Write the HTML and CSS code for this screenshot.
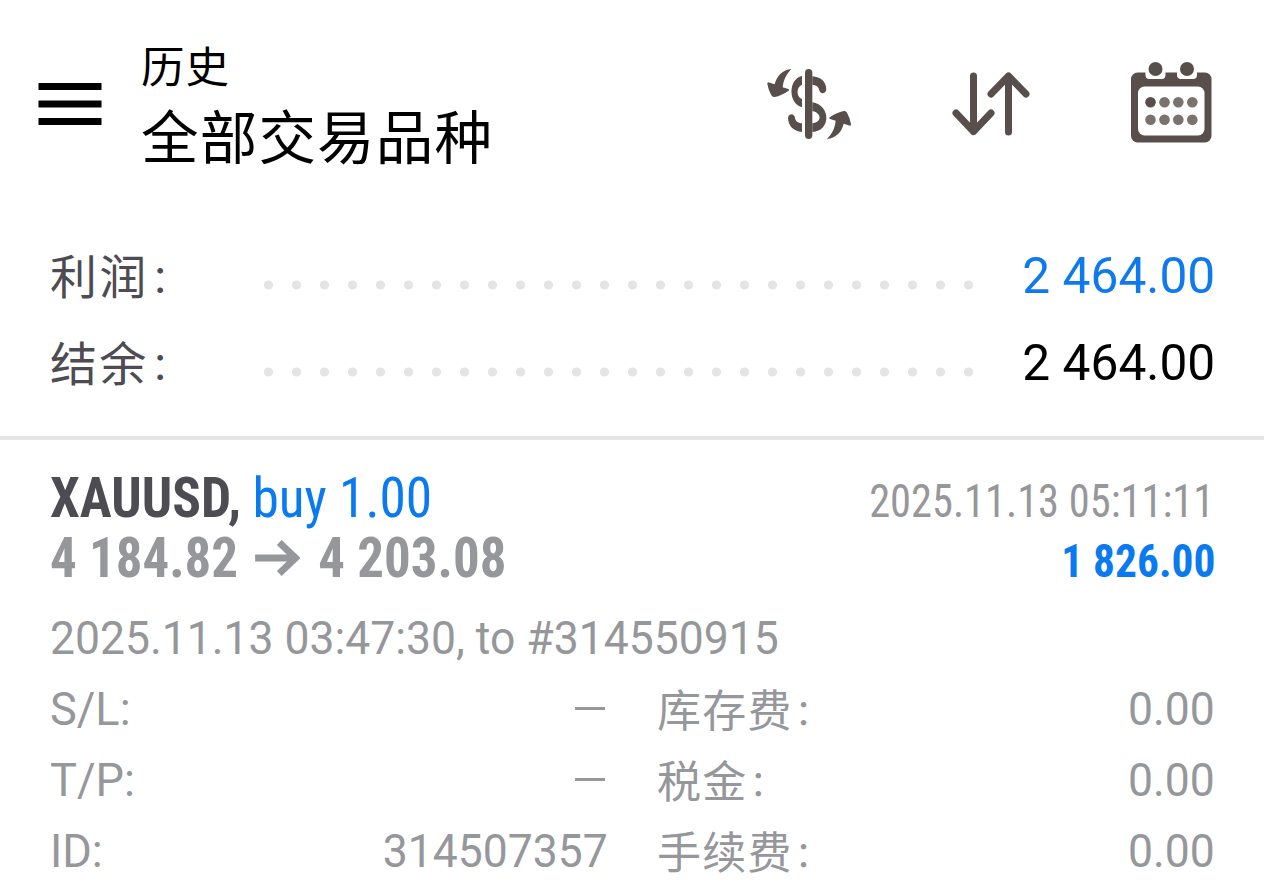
FILE: index.html
```html
<!DOCTYPE html>
<html lang="zh-CN">
<head>
<meta charset="utf-8">
<title>历史</title>
<link rel="stylesheet" href="styles.css">
</head>
<body>
<header class="topbar">
  <svg class="menu" viewBox="0 0 64 44"><path d="M.5 4.500h63M.5 22h63M.5 39.500h63" stroke="#000" stroke-width="7"/></svg>
  <div class="titles">
    <div class="title-small">历史</div>
    <div class="title-large">全部交易品种</div>
  </div>
  <div class="actions">
    <svg class="icon" viewBox="0 0 360 330" fill="#584e4c">
      <rect x="165" y="57" width="22" height="210" rx="11"/>
      <path d="M156 78C114 87 114 160 156 172V147C138 141 138 111 156 104Z"/>
      <path d="M187 79C212 81 228 94 229 118C228 132 211 135 208 121C206 110 198 105 187 104Z"/>
      <path d="M187 157C243 166 243 244 187 246V220C216 217 216 189 187 183Z"/>
      <path d="M156 246C130 243 115 228 114 203C116 189 133 189 135 203C136 213 144 219 156 220Z"/>
      <path d="M124 57C98 60 80 77 74 103L55 97Q51 97 52 102Q55 120 64 136Q67 142 74 141Q94 137 116 122Q119 119 115 117L98 112C100 92 107 75 124 57Z"/>
      <path d="M231 267C257 264 275 247 281 221L300 227Q304 227 303 222Q300 204 291 188Q288 182 281 183Q261 187 239 202Q236 205 240 207L257 212C255 232 248 249 231 267Z"/>
    </svg>
    <svg class="icon" viewBox="930 50 120 110" fill="none" stroke="#584e4c" stroke-width="7" stroke-linecap="round" stroke-linejoin="round">
      <path d="M973.500 76V131.500M956 113L973.500 131.500L991 113M1008.500 132V76M991 94L1008.500 76L1026 94"/>
    </svg>
    <svg class="icon" viewBox="1110 50 120 110">
      <rect x="1131" y="72.500" width="80.500" height="70" rx="6.500" fill="#584e4c"/>
      <path d="M1145.500 65H1165.500V75Q1165.500 79 1161.500 79H1149.500Q1145.500 79 1145.500 75ZM1177 65H1197V75Q1197 79 1193 79H1181Q1177 79 1177 75Z" fill="#fff"/>
      <rect x="1138" y="86.500" width="66.500" height="49" rx="6.500" fill="#fff"/>
      <g fill="#584e4c"><circle cx="1155.500" cy="69" r="7"/><circle cx="1187" cy="69" r="7"/><circle cx="1150.500" cy="102.300" r="5.300"/></g>
      <g fill="#7a726f"><circle cx="1164.500" cy="102.300" r="5.300"/><circle cx="1178.300" cy="102.300" r="5.300"/><circle cx="1192.300" cy="102.300" r="5.300"/><circle cx="1150.500" cy="119.700" r="5.300"/><circle cx="1164.500" cy="119.700" r="5.300"/><circle cx="1178.300" cy="119.700" r="5.300"/><circle cx="1192.300" cy="119.700" r="5.300"/></g>
    </svg>
  </div>
</header>
<section class="summary">
  <div class="sum-row"><span class="sum-label">利润<span class="colon">：</span></span><span class="dots"></span><span class="sum-value profit">2 464.00</span></div>
  <div class="sum-row"><span class="sum-label">结余<span class="colon">：</span></span><span class="dots"></span><span class="sum-value">2 464.00</span></div>
</section>
<main class="deal">
  <div class="deal-row">
    <div class="deal-main order"><span class="cond symbol">XAUUSD,</span><span class="cond side">buy 1.00</span></div>
    <span class="cond time">2025.11.13 05:11:11</span>
  </div>
  <div class="deal-row">
    <div class="deal-main prices"><span class="cond price">4 184.82</span><svg class="arrow" viewBox="0 0 46 36" preserveAspectRatio="none"><path d="M0 18H41M24.500 2.500L41 18L24.500 33.500" fill="none" stroke="#96979b" stroke-width="7"/></svg><span class="cond price">4 203.08</span></div>
    <span class="cond result">1 826.00</span>
  </div>
  <div class="note">2025.11.13 03:47:30, to #314550915</div>
  <div class="details">
    <div class="pair"><span class="key">S/L:</span><i class="dash"></i></div>
    <div class="pair"><span class="cjk">库存费<span class="colon">：</span></span><span class="num">0.00</span></div>
    <div class="pair"><span class="key">T/P:</span><i class="dash"></i></div>
    <div class="pair"><span class="cjk">税金<span class="colon">：</span></span><span class="num">0.00</span></div>
    <div class="pair"><span class="key">ID:</span><span class="num">314507357</span></div>
    <div class="pair"><span class="cjk">手续费<span class="colon">：</span></span><span class="num">0.00</span></div>
  </div>
</main>
</body>
</html>
```
FILE: styles.css
```css
* { box-sizing: border-box; }
body {
  margin: 0;
  height: 894px;
  overflow: hidden;
  background: #fff;
  color: #000;
  font-family: Roboto, "Noto Sans CJK SC", sans-serif;
}
.topbar { display: flex; height: 232px; padding: 0 34px 0 38px; }
.menu { width: 64px; height: 44px; margin-top: 82px; }
.titles { margin-left: 39px; padding-top: 35px; white-space: nowrap; font-family: "Noto Sans CJK SC", sans-serif; }
.title-small { font-size: 43.500px; line-height: 60px; letter-spacing: 1px; }
.title-large { font-size: 57.500px; line-height: 78px; letter-spacing: 1.200px; }
.actions { display: flex; gap: 60px; margin-left: auto; padding-top: 50px; }
.icon { width: 120px; height: 110px; }
.summary { height: 208px; border-bottom: 4px solid #e4e4e4; padding: 0 49px 0 50px; }
.sum-row { display: flex; height: 87px; line-height: 87px; font-size: 50px; }
.sum-label { width: 204px; height: 83px; line-height: 83px; font-size: 47px; letter-spacing: 2.300px; color: #4d4c52; font-family: "Noto Sans CJK SC", sans-serif; }
.colon { font-size: .8em; line-height: 1; margin-left: .06em; vertical-align: .06em; }
.dots {
  width: 728px;
  height: 10px;
  margin-top: 48px;
  background: radial-gradient(circle at 14.500px 5px, #e4e4e4 4.200px, transparent 4.900px) 0 0 / 28px 10px repeat-x;
}
.sum-value { margin-left: auto; padding-top: 1px; transform: scaleX(.993); transform-origin: right; }
.profit { color: #0f79ee; }
.deal { padding: 28px 49px 0 50px; color: #96979b; }
.deal-row { display: flex; justify-content: space-between; height: 60px; line-height: 60px; }
.deal-main { display: flex; transform-origin: left; }
.order { transform: scaleX(.953); }
.prices { transform: scaleX(.945); }
.cond { font-stretch: 75%; font-family: "Roboto Condensed", Roboto, sans-serif; white-space: pre; }
.symbol { font-size: 56px; font-weight: 700; color: #4d4c52; }
.side { font-size: 56px; margin-left: 12px; color: #0a7af0; }
.time { font-size: 46px; padding-top: 3px; margin-right: 1px; transform: scaleX(.922); transform-origin: right; }
.price { font-size: 56px; font-weight: 700; }
.arrow { width: 48px; height: 36px; margin: 12px 19px 0 18px; }
.result { font-size: 46px; font-weight: 700; color: #0a7af0; padding-top: 3px; transform: scaleX(.944); transform-origin: right; }
.note { margin-top: 15px; font-size: 46px; line-height: 71px; transform: scaleX(.967); transform-origin: left; }
.details { display: grid; grid-template-columns: 558px 558px; column-gap: 49px; font-size: 46px; line-height: 71px; }
.pair { display: flex; justify-content: space-between; height: 71px; }
.key { transform: scaleX(.98); transform-origin: left; }
.num { transform: scaleX(.967); transform-origin: right; }
.cjk { height: 68px; line-height: 68px; font-size: 44px; letter-spacing: 1.200px; font-family: "Noto Sans CJK SC", sans-serif; }
.dash { width: 30px; height: 3px; margin: 33px 3px 0 0; background: #96979b; }
```
